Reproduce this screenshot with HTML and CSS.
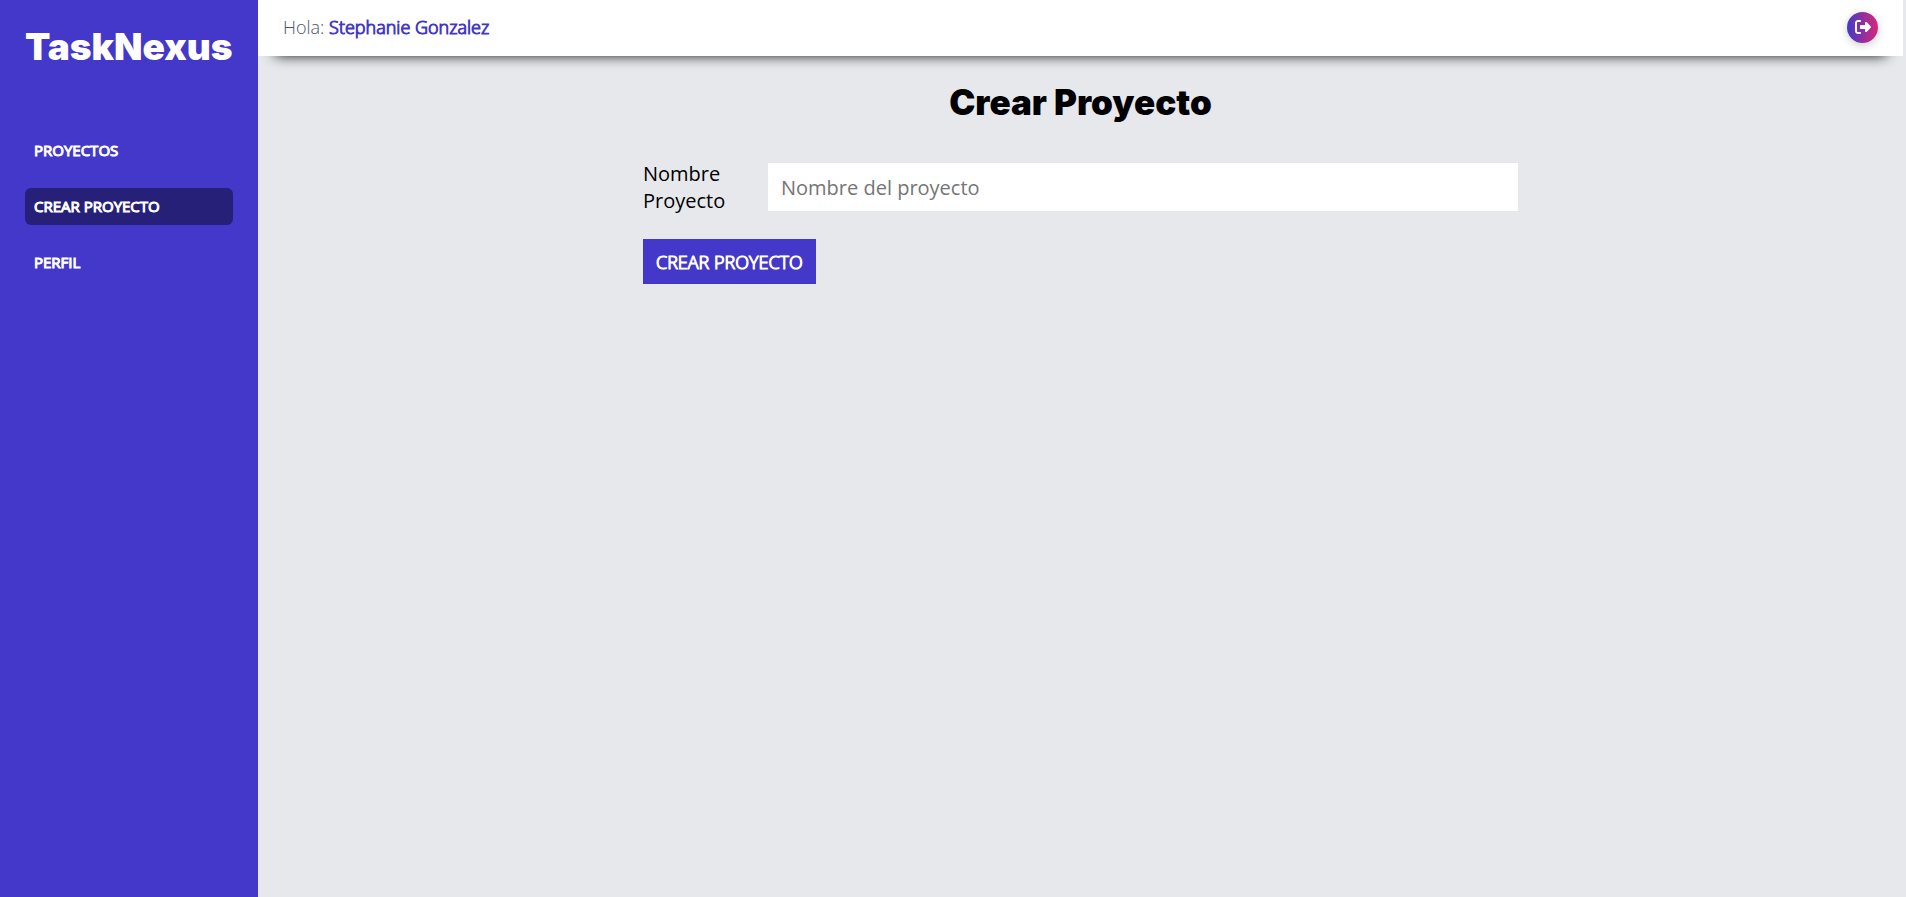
FILE: index.html
```html
<!DOCTYPE html>
<html lang="es">
<head>
<meta charset="utf-8">
<title>TaskNexus</title>
<link rel="stylesheet" href="styles.css">
</head>
<body>
<div class="dashboard">
  <aside class="sidebar">
    <h2 class="brand">TaskNexus</h2>
    <nav class="sidebar-nav">
      <a href="#proyectos">Proyectos</a>
      <a class="active" href="#crear">Crear Proyecto</a>
      <a href="#perfil">Perfil</a>
    </nav>
  </aside>
  <div class="main">
    <header class="topbar">
      <p class="greeting">Hola: <span>Stephanie Gonzalez</span></p>
      <a class="logout" href="#salir" aria-label="Cerrar sesión">
        <svg viewBox="0 0 512 512" aria-hidden="true"><path fill="currentColor" d="M377.900 105.900L500.700 228.700c7.200 7.200 11.300 17.100 11.300 27.300s-4.100 20.100-11.300 27.300L377.900 406.100c-6.400 6.400-15 9.900-24 9.900c-18.700 0-33.900-15.200-33.900-33.900V320H192c-17.700 0-32-14.300-32-32v-64c0-17.700 14.300-32 32-32h128v-62.100c0-18.700 15.200-33.900 33.900-33.900c9 0 17.600 3.600 24 9.900zM160 96H96c-17.700 0-32 14.300-32 32v256c0 17.700 14.300 32 32 32h64c17.700 0 32 14.300 32 32s-14.300 32-32 32H96c-53 0-96-43-96-96V128C0 75 43 32 96 32h64c17.700 0 32 14.300 32 32s-14.300 32-32 32z"/></svg>
      </a>
    </header>
    <main class="content">
      <h1 class="page-title">Crear Proyecto</h1>
      <form class="form">
        <div class="field">
          <label for="nombre">Nombre Proyecto</label>
          <input id="nombre" type="text" placeholder="Nombre del proyecto">
        </div>
        <button class="submit" type="submit">Crear Proyecto</button>
      </form>
    </main>
  </div>
</div>
</body>
</html>
```
FILE: styles.css
```css
*, *::before, *::after {
  box-sizing: border-box;
}

body {
  margin: 0;
  background: #e7e8ec;
  color: #000;
  font-family: "Open Sans", "Noto Sans", sans-serif;
  font-size: 20px;
}

.dashboard {
  display: flex;
  min-height: 100vh;
  padding-right: 3px;
}

.sidebar {
  flex: 0 0 258px;
  min-width: 0;
  padding: 25px;
  background: #4338ca;
}

.brand {
  margin: 0;
  color: #fff;
  font: 900 37px/44px Inter, sans-serif;
}

.sidebar-nav {
  display: flex;
  flex-direction: column;
  gap: 19px;
  margin-top: 63px;
}

.sidebar-nav a {
  padding: 8px 9px;
  border-radius: 6px;
  color: #fff;
  font-size: 15px;
  line-height: 21px;
  text-transform: uppercase;
  text-decoration: none;
  -webkit-text-stroke: 1px;
}

.sidebar-nav .active {
  background: #262079;
}

.main {
  flex: 1;
  min-width: 0;
}

.topbar {
  display: flex;
  align-items: center;
  justify-content: space-between;
  height: 56px;
  padding: 0 25px 2px;
  background: #fff;
  box-shadow: 0 16px 14px -17px #000;
}

.greeting {
  margin: 0;
  color: #4b5563;
  font-size: 18px;
  font-weight: 300;
}

.greeting span {
  color: #4338ca;
  -webkit-text-stroke: 1px;
}

.logout {
  display: grid;
  place-items: center;
  width: 31px;
  height: 31px;
  border-radius: 50%;
  background: linear-gradient(to right, #4338ca, #db2777);
  box-shadow: 0 2px 8px rgb(0 0 0 / 20%);
  color: #fff;
}

.logout svg {
  width: 16px;
  height: 16px;
}

.page-title {
  margin: 0;
  text-align: center;
  font: 900 35px/42px Inter, sans-serif;
}

.content {
  padding: 25px;
}

.form {
  max-width: 875px;
  margin: 37px auto 0;
}

.field {
  display: flex;
  align-items: center;
  margin-bottom: 25px;
}

.field label {
  flex: 0 0 125px;
  padding-right: 25px;
  line-height: 27px;
}

.field input {
  flex: 1;
  min-width: 0;
  height: 48px;
  padding: 0 13px;
  border: 0;
  background: #fff;
  font: inherit;
}

.field input::placeholder {
  color: #757575;
}

.submit {
  padding: 11px 13px 9px;
  border: 0;
  background: #4338ca;
  color: #fff;
  font: 300 18px/25px "Open Sans", "Noto Sans", sans-serif;
  text-transform: uppercase;
  text-shadow: 0 0 1px #fff;
  -webkit-text-stroke: 1px;
  cursor: pointer;
}
```
